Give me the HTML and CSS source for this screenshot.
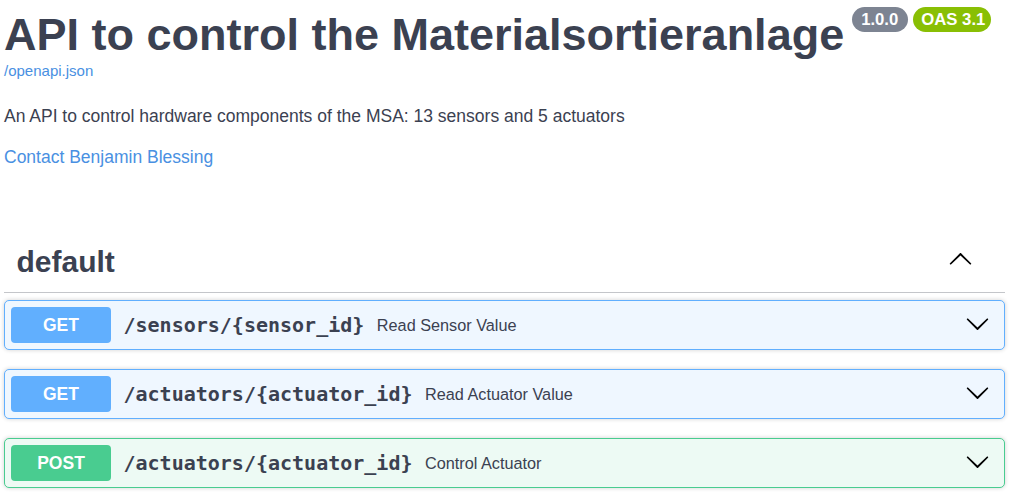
FILE: index.html
```html
<!DOCTYPE html>
<html lang="en">
<head>
<meta charset="utf-8">
<title>API to control the Materialsortieranlage</title>
<link rel="stylesheet" href="styles.css">
</head>
<body>
<div class="wrapper">
  <div class="info">
    <div class="title-row">
      <h2 class="title">API to control the Materialsortieranlage</h2>
      <span class="badge badge-version">1.0.0</span>
      <span class="badge badge-oas">OAS 3.1</span>
    </div>
    <a class="spec-link" href="#">/openapi.json</a>
    <p class="description">An API to control hardware components of the MSA: 13 sensors and 5 actuators</p>
    <a class="contact-link" href="#">Contact Benjamin Blessing</a>
  </div>

  <section class="tag-section">
    <h3 class="opblock-tag">
      <span class="tag-name">default</span>
      <svg class="arrow arrow-up" width="25" height="25" viewBox="0 0 20 20"><path transform="rotate(180 10 10)" d="M17.418 6.109c.272-.268.709-.268.979 0s.271.701 0 .969l-7.908 7.830c-.27.268-.707.268-.979 0l-7.908-7.830c-.27-.268-.27-.701 0-.969.271-.268.709-.268.979 0L10 13.25l7.418-7.141z"/></svg>
    </h3>

    <div class="opblock opblock-get">
      <div class="summary">
        <span class="method">GET</span>
        <span class="path">/sensors/{sensor_id}</span>
        <span class="summary-text">Read Sensor Value</span>
        <svg class="arrow" width="25" height="25" viewBox="0 0 20 20"><path d="M17.418 6.109c.272-.268.709-.268.979 0s.271.701 0 .969l-7.908 7.83c-.27.268-.707.268-.979 0l-7.908-7.83c-.27-.268-.27-.701 0-.969.271-.268.709-.268.979 0L10 13.25l7.418-7.141z"/></svg>
      </div>
    </div>

    <div class="opblock opblock-get">
      <div class="summary">
        <span class="method">GET</span>
        <span class="path">/actuators/{actuator_id}</span>
        <span class="summary-text">Read Actuator Value</span>
        <svg class="arrow" width="25" height="25" viewBox="0 0 20 20"><path d="M17.418 6.109c.272-.268.709-.268.979 0s.271.701 0 .969l-7.908 7.83c-.27.268-.707.268-.979 0l-7.908-7.83c-.27-.268-.27-.701 0-.969.271-.268.709-.268.979 0L10 13.25l7.418-7.141z"/></svg>
      </div>
    </div>

    <div class="opblock opblock-post">
      <div class="summary">
        <span class="method">POST</span>
        <span class="path">/actuators/{actuator_id}</span>
        <span class="summary-text">Control Actuator</span>
        <svg class="arrow" width="25" height="25" viewBox="0 0 20 20"><path d="M17.418 6.109c.272-.268.709-.268.979 0s.271.701 0 .969l-7.908 7.83c-.27.268-.707.268-.979 0l-7.908-7.83c-.27-.268-.27-.701 0-.969.271-.268.709-.268.979 0L10 13.25l7.418-7.141z"/></svg>
      </div>
    </div>
  </section>
</div>
</body>
</html>
```

FILE: styles.css
```css
html, body {
  margin: 0;
  padding: 0;
  background: #fff;
}

body {
  font-family: "Liberation Sans", Arial, sans-serif;
  color: #3b4151;
}

.wrapper {
  padding: 7px 5px 0 4px;
}

.info {
  display: flex;
  flex-direction: column;
  align-items: flex-start;
}

.title-row {
  display: flex;
  align-items: flex-start;
}

.title {
  margin: 0;
  font-size: 45px;
  line-height: 55px;
  font-weight: bold;
  color: #3b4151;
}

.badge {
  display: inline-block;
  height: 25px;
  line-height: 25px;
  border-radius: 57px;
  color: #fff;
  font-size: 16.7px;
  font-weight: bold;
}

.badge-version {
  background: #7d8492;
  margin-left: 8px;
  padding: 0 10px 0 9px;
}

.badge-oas {
  background: #89bf04;
  margin-left: 5px;
  padding: 0 6px 0 8px;
}

.spec-link {
  font-size: 15px;
  line-height: 18px;
  color: #4990e2;
  text-decoration: none;
}

.description {
  margin: 26px 0 0;
  font-size: 17.5px;
  line-height: 21px;
  color: #3b4151;
}

.contact-link {
  margin-top: 19.5px;
  font-size: 17.5px;
  line-height: 21px;
  color: #4990e2;
  text-decoration: none;
}

.tag-section {
  margin-top: 64px;
}

.opblock-tag {
  display: flex;
  align-items: center;
  margin: 0 0 7px;
  padding: 12.5px 32px 12px 12.5px;
  border-bottom: 1px solid rgba(59, 65, 81, 0.3);
  font-size: 30px;
  line-height: 36px;
  font-weight: bold;
  color: #3b4151;
}

.tag-name {
  flex: 1;
}

.arrow {
  display: block;
  flex: none;
  fill: #000;
}

.arrow-up {
  margin-bottom: 5px;
}

.opblock {
  margin: 0 0 19px;
  border: 1px solid #000;
  border-radius: 5px;
  box-shadow: 0 0 4px rgba(0, 0, 0, 0.19);
}

.opblock-get {
  background: #eff7ff;
  border-color: #61affe;
}

.opblock-post {
  background: #edfaf4;
  border-color: #49cc90;
}

.summary {
  display: flex;
  align-items: center;
  padding: 6px 14px 6px 6px;
}

.method {
  flex: none;
  width: 100px;
  height: 36px;
  line-height: 36px;
  border-radius: 4px;
  text-align: center;
  color: #fff;
  font-size: 17.5px;
  font-weight: bold;
}

.opblock-get .method {
  background: #61affe;
}

.opblock-post .method {
  background: #49cc90;
}

.path {
  padding: 0 12.5px;
  font-family: "DejaVu Sans Mono", monospace;
  font-weight: bold;
  font-size: 20px;
  color: #3b4151;
}

.summary-text {
  flex: 1;
  font-size: 16.25px;
  color: #3b4151;
}

.summary .arrow {
  margin-bottom: 4px;
}
```
